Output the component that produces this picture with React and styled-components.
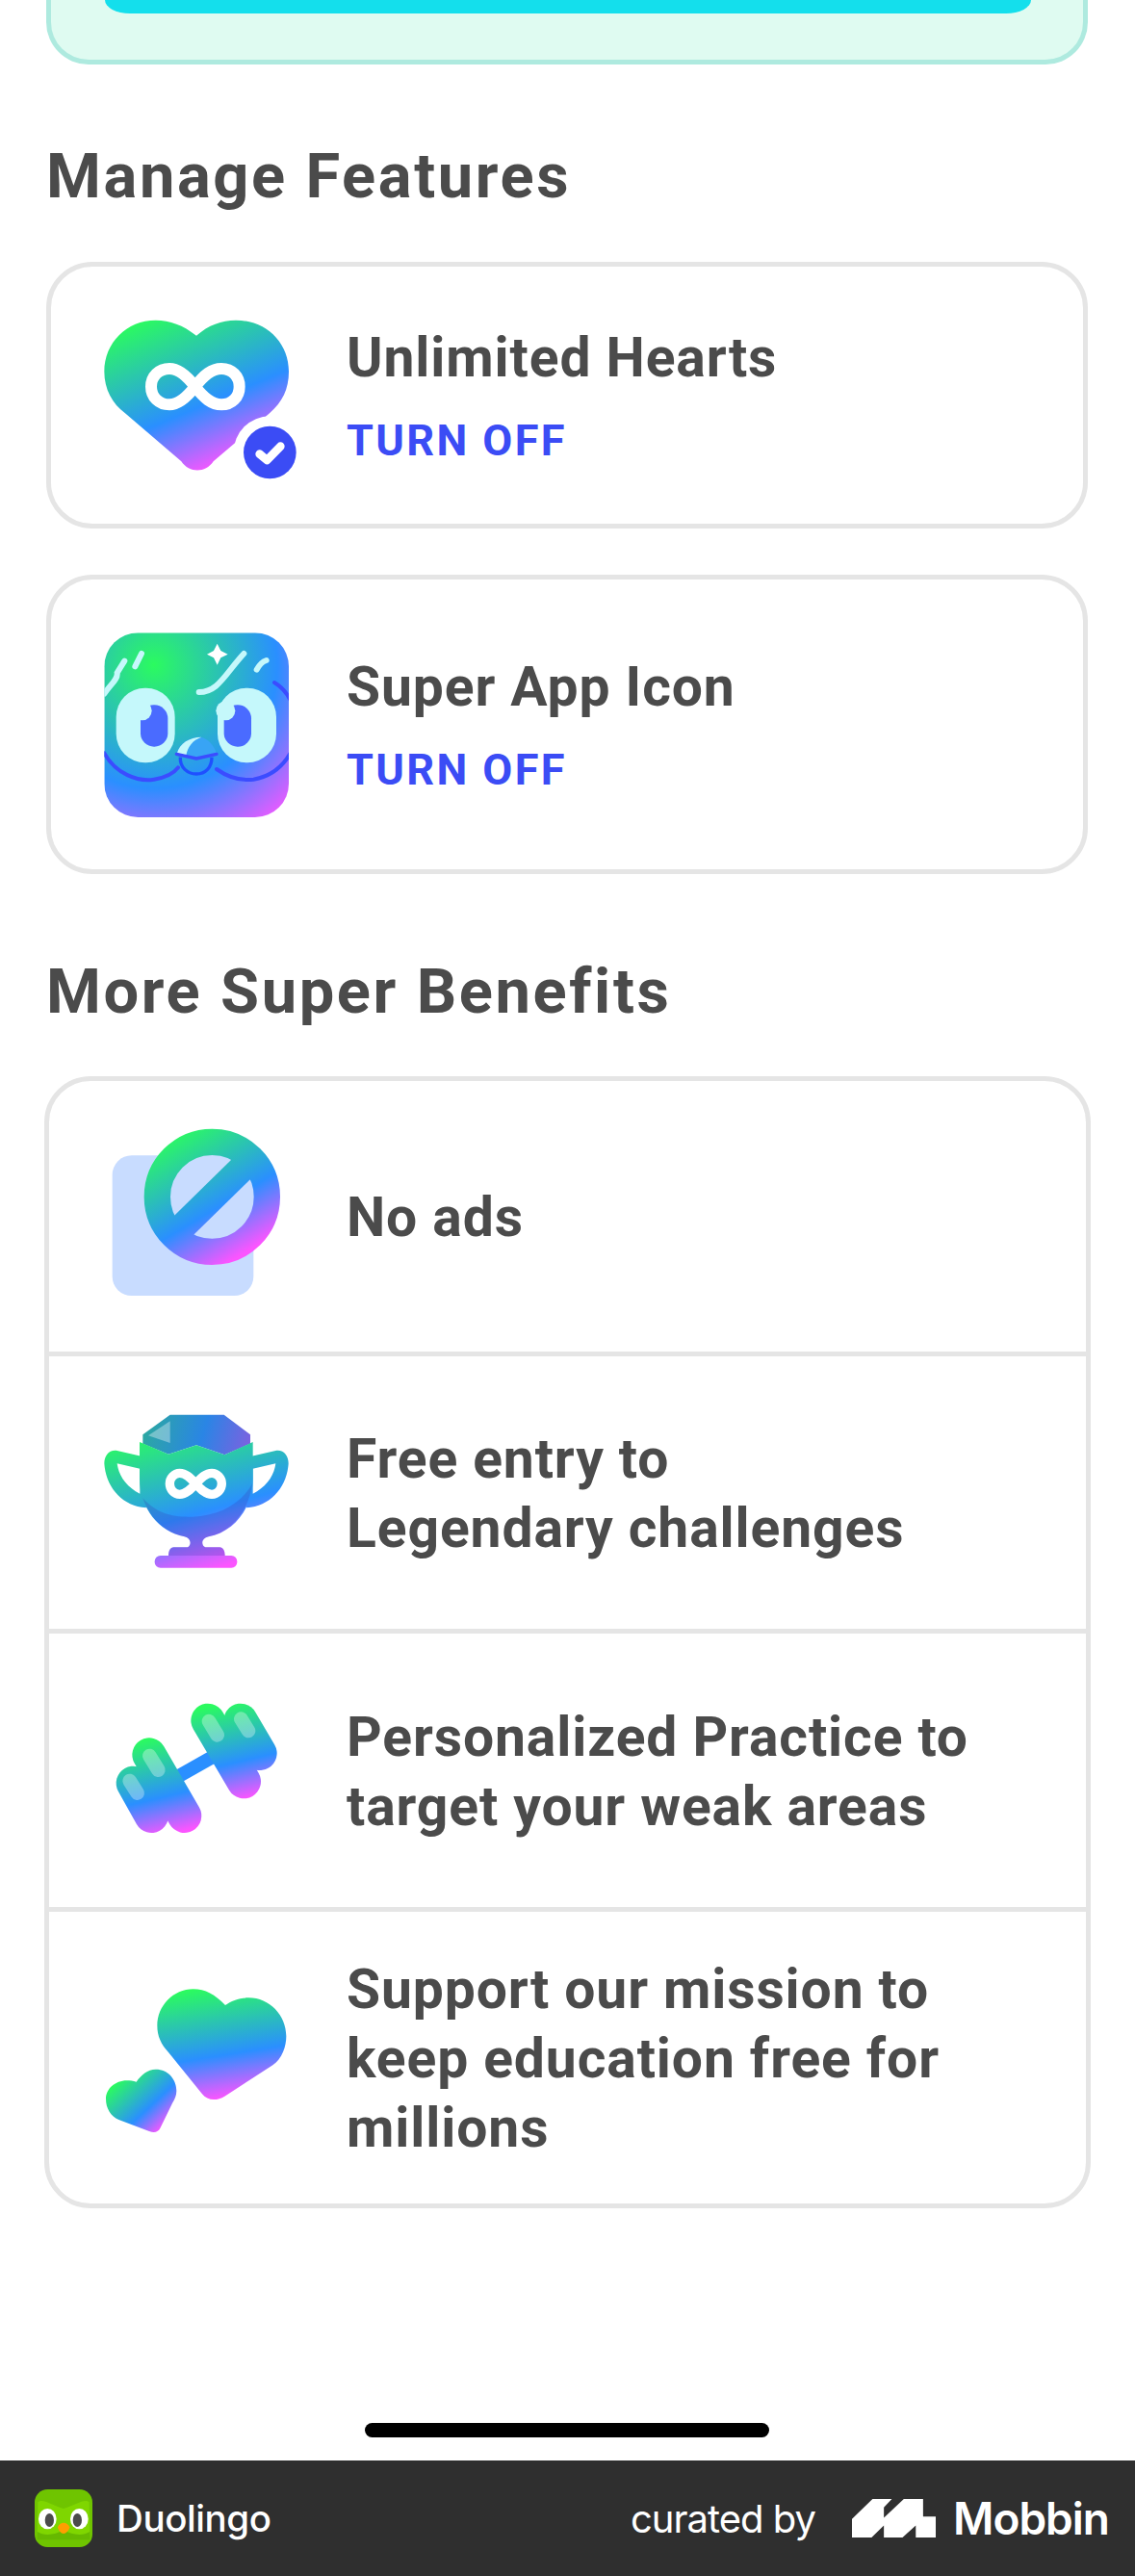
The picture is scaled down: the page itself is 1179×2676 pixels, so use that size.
import React from 'react';
import styled, { createGlobalStyle } from 'styled-components';

const GlobalStyle = createGlobalStyle`
  html, body {
    margin: 0;
    padding: 0;
    background: #fff;
  }
`;

const Page = styled.div`
  width: 1179px;
  height: 2676px;
  display: flex;
  flex-direction: column;
  overflow: hidden;
  font-family: Roboto, 'Liberation Sans', sans-serif;
  color: #4b4b4b;
`;

const Content = styled.main`
  flex: 1;
  display: flex;
  flex-direction: column;
  padding: 0 49px 0 48px;
`;

const PromoCard = styled.div`
  height: 67px;
  box-sizing: border-box;
  padding: 0 54px 0 56px;
  background: #dffbf1;
  border: 5px solid #aeeadf;
  border-top: 0;
  border-radius: 0 0 44px 44px;
`;

const PromoButton = styled.div`
  height: 14px;
  background: #14dfec;
  border-radius: 0 0 26px 26px / 0 0 14px 14px;
`;

const SectionTitle = styled.h2`
  margin: ${(p) => p.$top}px 0 ${(p) => p.$bottom}px;
  font-size: 65px;
  line-height: 72px;
  font-weight: 700;
  letter-spacing: 2.6px;
`;

const FeatureCard = styled.div`
  height: ${(p) => p.$height}px;
  box-sizing: border-box;
  margin-bottom: ${(p) => p.$bottom}px;
  padding-left: 47px;
  display: flex;
  align-items: center;
  gap: 50px;
  border: 5px solid #e5e5e5;
  border-radius: 48px;
`;

const FeatureText = styled.div`
  display: flex;
  flex-direction: column;
  gap: 25px;
  margin-bottom: 2px;
`;

const RowTitle = styled.div`
  font-size: 57px;
  line-height: 72px;
  font-weight: 700;
  letter-spacing: 0.9px;
`;

const TurnOff = styled.div`
  font-size: 45px;
  line-height: 50px;
  font-weight: 700;
  letter-spacing: 2.4px;
  color: #3b4cf5;
`;

const BenefitList = styled.div`
  margin: 0 -3px 0 -2px;
  border: 5px solid #e5e5e5;
  border-radius: 48px;
`;

const BenefitRow = styled.div`
  height: ${(p) => p.$height}px;
  box-sizing: border-box;
  padding-left: 49px;
  display: flex;
  align-items: center;
  gap: 50px;
  & + & {
    border-top: 5px solid #e5e5e5;
  }
`;

const BenefitText = styled.div`
  padding-top: 3px;
`;

const Icon = styled.svg`
  width: 210px;
  height: 210px;
  flex-shrink: 0;
  display: block;
`;

const HomeBar = styled.div`
  width: 420px;
  height: 15px;
  margin: auto auto 24px;
  border-radius: 8px;
  background: #000;
`;

const Footer = styled.footer`
  height: 120px;
  box-sizing: border-box;
  padding: 0 27px 0 36px;
  display: flex;
  align-items: center;
  justify-content: space-between;
  background: #2f2f2f;
  color: #fff;
  font-family: Inter, 'Liberation Sans', sans-serif;
`;

const FooterGroup = styled.div`
  display: flex;
  align-items: center;
  gap: ${(p) => p.$gap}px;
`;

const AppName = styled.span`
  font-size: 38.5px;
  font-weight: 500;
  letter-spacing: -0.4px;
`;

const Curated = styled.span`
  font-size: 40px;
  font-weight: 400;
  letter-spacing: -1px;
  margin-right: 20px;
`;

const Brand = styled.span`
  font-size: 46px;
  font-weight: 600;
  letter-spacing: -1px;
`;

const Stops = () => (
  <>
    <stop offset="0" stopColor="#2bfb5f" />
    <stop offset="0.62" stopColor="#2a8fff" />
    <stop offset="1" stopColor="#fb55ff" />
  </>
);

const HeartIcon = () => (
  <Icon viewBox="60 15 630 630">
    <defs>
      <linearGradient id="heartFill" gradientUnits="userSpaceOnUse" x1="200" y1="95" x2="400" y2="570">
        <Stops />
      </linearGradient>
    </defs>
    <path
      d="M372 143C330 110 290 95 245 95C155 95 85 165 85 255C85 310 110 355 150 385L325 535C350 572 400 572 425 535L600 385C640 350 660 310 660 255C660 165 590 95 495 95C450 95 410 110 372 143Z"
      fill="url(#heartFill)"
    />
    <path
      d="M368 302C340 265 315 246 288 246C255 246 231 270 231 302C231 334 255 358 288 358C315 358 340 338 368 302C396 265 420 246 450 246C483 246 506 270 506 302C506 334 483 358 450 358C420 358 396 338 368 302Z"
      fill="none"
      stroke="#fff"
      strokeWidth="36"
    />
    <circle cx="601" cy="507" r="113" fill="#fff" />
    <circle cx="601" cy="507" r="82" fill="#3b4cf5" />
    <path d="M569 512L592 531L634 488" fill="none" stroke="#fff" strokeWidth="26" strokeLinecap="round" strokeLinejoin="round" />
  </Icon>
);

const AppIconArt = () => (
  <Icon viewBox="60 22 630 630">
    <defs>
      <radialGradient id="appFill" gradientUnits="userSpaceOnUse" cx="240" cy="150" r="620">
        <Stops />
      </radialGradient>
      <clipPath id="appClip">
        <rect x="85" y="50" width="575" height="575" rx="105" />
      </clipPath>
    </defs>
    <g clipPath="url(#appClip)">
      <rect x="85" y="50" width="575" height="575" fill="url(#appFill)" />
      <g fill="none" stroke="#c5f8fb" strokeWidth="18" strokeLinecap="round">
        <path d="M85 240C105 210 128 195 125 175L148 138" />
        <path d="M181 155L201 115" />
        <path d="M380 235C440 235 460 180 520 115" />
        <path d="M560 165C568 150 578 140 590 136" />
      </g>
      <path d="M437 84L448 106L470 117L448 128L437 150L426 128L405 117L426 106Z" fill="#fff" />
      <g fill="none" stroke="#3b4cff" strokeWidth="12" strokeLinecap="round">
        <path d="M85 425C120 490 190 515 240 507C270 502 300 490 315 470" />
        <path d="M435 475C470 500 510 512 550 507C610 497 645 460 665 425" />
        <path d="M615 205C640 220 655 240 665 260" />
      </g>
      <rect x="122" y="222" width="183" height="233" rx="90" fill="#c5f8fb" />
      <rect x="438" y="222" width="183" height="233" rx="90" fill="#c5f8fb" />
      <rect x="198" y="275" width="85" height="130" rx="42" fill="#4a6bff" />
      <rect x="458" y="275" width="85" height="130" rx="42" fill="#4a6bff" />
      <circle cx="203" cy="293" r="30" fill="#c5f8fb" />
      <circle cx="463" cy="293" r="30" fill="#c5f8fb" />
      <path d="M310 425C320 395 350 375 385 375C410 380 425 400 435 425L372 440Z" fill="#38a4f5" />
      <path d="M312 425C320 395 350 375 388 375C360 385 345 405 340 432Z" fill="#c5f8fb" />
      <path d="M322 438C320 470 345 490 372 490C400 490 420 470 420 438" fill="none" stroke="#1f50ff" strokeWidth="10" />
      <path d="M310 428L372 442L435 428" fill="none" stroke="#3b4cff" strokeWidth="10" strokeLinecap="round" strokeLinejoin="round" />
    </g>
  </Icon>
);

const NoAdsIcon = () => (
  <Icon viewBox="60 26 630 630">
    <defs>
      <linearGradient id="noAdsFill" gradientUnits="userSpaceOnUse" x1="290" y1="90" x2="510" y2="460">
        <Stops />
      </linearGradient>
    </defs>
    <rect x="110" y="150" width="440" height="437" rx="60" fill="#c8dcff" />
    <circle cx="421" cy="279" r="171" fill="#c8dcff" stroke="url(#noAdsFill)" strokeWidth="82" />
    <path d="M300 400L545 160" stroke="url(#noAdsFill)" strokeWidth="85" />
  </Icon>
);

const TrophyIcon = () => (
  <Icon viewBox="60 -11 630 630">
    <defs>
      <linearGradient id="trophyFill" gradientUnits="userSpaceOnUse" x1="120" y1="140" x2="249" y2="590">
        <Stops />
      </linearGradient>
      <linearGradient id="lidFill" gradientUnits="userSpaceOnUse" x1="220" y1="80" x2="530" y2="170">
        <stop offset="0" stopColor="#2ca7a3" />
        <stop offset="0.55" stopColor="#2a85e5" />
        <stop offset="1" stopColor="#7a62e0" />
      </linearGradient>
    </defs>
    <path
      d="M205 122L290 60H458L540 122V150L460 185L372 155L285 183L205 150Z"
      fill="url(#lidFill)"
    />
    <path d="M222 125L290 80V148Z" fill="#fff" fillOpacity="0.35" />
    <path
      fillRule="evenodd"
      fill="url(#trophyFill)"
      d="M200 189L125 172C100 168 85 188 85 212C90 285 140 345 215 350L230 310L200 190ZM125 212L196 228V306C155 285 130 252 125 212Z"
    />
    <path
      fillRule="evenodd"
      fill="url(#trophyFill)"
      d="M544 189L619 172C644 168 659 188 659 212C654 285 604 345 529 350L514 310L544 190ZM619 212L548 228V306C589 285 614 252 619 212Z"
    />
    <path
      d="M195 145L285 183L372 155L460 185L548 145V260C548 350 490 425 410 440C388 445 385 465 400 473H445C455 473 461 485 461 499H285C285 485 291 473 301 473H345C358 465 355 445 335 440C255 425 195 350 195 260Z"
      fill="url(#trophyFill)"
    />
    <path
      d="M205 320C250 370 300 380 360 378C440 375 510 340 546 275C538 350 485 425 410 440C388 445 385 465 400 473H445C455 473 461 485 461 499H285C285 485 291 473 301 473H345C358 465 355 445 335 440C275 428 228 385 205 320Z"
      fill="#3a2fa8"
      fillOpacity="0.22"
    />
    <rect x="242" y="499" width="257" height="38" rx="18" fill="url(#trophyFill)" />
    <path
      d="M370 275C352 255 338 242 320 242C303 242 289 257 289 275C289 293 303 308 320 308C338 308 352 295 370 275C388 255 402 242 420 242C437 242 451 257 451 275C451 293 437 308 420 308C402 308 388 295 370 275Z"
      fill="none"
      stroke="#fff"
      strokeWidth="28"
    />
  </Icon>
);

const DumbbellIcon = () => (
  <Icon viewBox="60 -17 630 630">
    <defs>
      <linearGradient id="weightRight" gradientUnits="userSpaceOnUse" x1="450" y1="90" x2="520" y2="387">
        <Stops />
      </linearGradient>
      <linearGradient id="weightLeft" gradientUnits="userSpaceOnUse" x1="230" y1="197" x2="300" y2="493">
        <Stops />
      </linearGradient>
    </defs>
    <path d="M310 320L420 258" stroke="#2a8fff" strokeWidth="42" />
    <g fill="none" stroke="url(#weightRight)" strokeWidth="106" strokeLinecap="round">
      <path d="M408 143L520 333" />
      <path d="M510 143L570 245" />
    </g>
    <path d="M440 250H560V300H500Z" fill="url(#weightRight)" />
    <g fill="none" stroke="url(#weightLeft)" strokeWidth="106" strokeLinecap="round">
      <path d="M225 250L335 440" />
      <path d="M175 338L232 440" />
    </g>
    <g fill="none" stroke="#fff" strokeOpacity="0.32" strokeWidth="44" strokeLinecap="round">
      <path d="M411 145L437 188" />
      <path d="M511 138L534 175" />
      <path d="M226 253L253 297" />
      <path d="M164 331L188 369" />
    </g>
  </Icon>
);

const TwoHeartsIcon = () => (
  <Icon viewBox="60 -22 630 630">
    <defs>
      <linearGradient id="bigHeart" gradientUnits="userSpaceOnUse" x1="375" y1="78" x2="430" y2="422">
        <Stops />
      </linearGradient>
      <linearGradient id="smallHeart" gradientUnits="userSpaceOnUse" x1="115" y1="375" x2="255" y2="525">
        <Stops />
      </linearGradient>
    </defs>
    <path
      d="M462 128C430 95 400 78 362 78C300 78 250 130 250 192C250 225 262 250 285 275L390 405C405 425 435 428 460 412L610 315C640 295 652 255 652 225C652 160 600 105 535 105C505 105 480 115 462 128Z"
      fill="url(#bigHeart)"
    />
    <path
      d="M185 367C200 345 220 328 245 328C285 328 310 360 310 395C310 410 305 420 298 432L260 510C253 525 240 527 225 521L130 485C105 475 90 450 90 420C90 390 118 363 155 363C165 363 175 364 185 367Z"
      fill="url(#smallHeart)"
    />
  </Icon>
);

const DuoLogo = () => (
  <svg width="60" height="60" viewBox="108 48 180 180" style={{ display: 'block' }}>
    <rect x="108" y="48" width="180" height="180" rx="40" fill="#6fc400" />
    <path d="M118 88C135 75 165 100 198 108C230 100 262 75 278 88L280 190H116Z" fill="#7fd600" />
    <path d="M116 180C140 195 170 190 198 175C226 190 256 195 280 180V205H116Z" fill="#66b800" />
    <ellipse cx="148" cy="140" rx="28" ry="32" fill="#fff" />
    <ellipse cx="247" cy="140" rx="28" ry="32" fill="#fff" />
    <ellipse cx="154" cy="144" rx="14" ry="21" fill="#4b4b4b" />
    <ellipse cx="241" cy="144" rx="14" ry="21" fill="#4b4b4b" />
    <path d="M180 166C186 148 210 148 217 166C214 178 206 186 198 186C190 186 183 178 180 166Z" fill="#ff9e00" />
  </svg>
);

const MobbinMark = () => (
  <svg width="87" height="40" viewBox="716 78 252 119" preserveAspectRatio="none" style={{ display: 'block' }}>
    <path
      d="M716 197V140L778 78H836L812 104V136L872 78H930V132H968V197H908V160L868 197H812V160L775 197Z"
      fill="#fff"
    />
  </svg>
);

const benefits = [
  { key: 'ads', height: 281, icon: <NoAdsIcon />, lines: ['No ads'] },
  { key: 'legendary', height: 288, icon: <TrophyIcon />, lines: ['Free entry to', 'Legendary challenges'] },
  { key: 'practice', height: 289, icon: <DumbbellIcon />, lines: ['Personalized Practice to', 'target your weak areas'] },
  { key: 'mission', height: 308, icon: <TwoHeartsIcon />, lines: ['Support our mission to', 'keep education free for', 'millions'] },
];

const App = () => {
  return (
    <Page>
      <GlobalStyle />
      <Content>
        <PromoCard>
          <PromoButton />
        </PromoCard>

        <SectionTitle $top={80} $bottom={53}>Manage Features</SectionTitle>
        <FeatureCard $height={277} $bottom={48}>
          <HeartIcon />
          <FeatureText>
            <RowTitle>Unlimited Hearts</RowTitle>
            <TurnOff>TURN OFF</TurnOff>
          </FeatureText>
        </FeatureCard>
        <FeatureCard $height={311} $bottom={0}>
          <AppIconArt />
          <FeatureText>
            <RowTitle>Super App Icon</RowTitle>
            <TurnOff>TURN OFF</TurnOff>
          </FeatureText>
        </FeatureCard>

        <SectionTitle $top={86} $bottom={52}>More Super Benefits</SectionTitle>
        <BenefitList>
          {benefits.map((item) => (
            <BenefitRow key={item.key} $height={item.height}>
              {item.icon}
              <BenefitText>
                {item.lines.map((line) => (
                  <RowTitle key={line}>{line}</RowTitle>
                ))}
              </BenefitText>
            </BenefitRow>
          ))}
        </BenefitList>

        <HomeBar />
      </Content>

      <Footer>
        <FooterGroup $gap={25}>
          <DuoLogo />
          <AppName>Duolingo</AppName>
        </FooterGroup>
        <FooterGroup $gap={18}>
          <Curated>curated by</Curated>
          <MobbinMark />
          <Brand>Mobbin</Brand>
        </FooterGroup>
      </Footer>
    </Page>
  );
};

export default App;
